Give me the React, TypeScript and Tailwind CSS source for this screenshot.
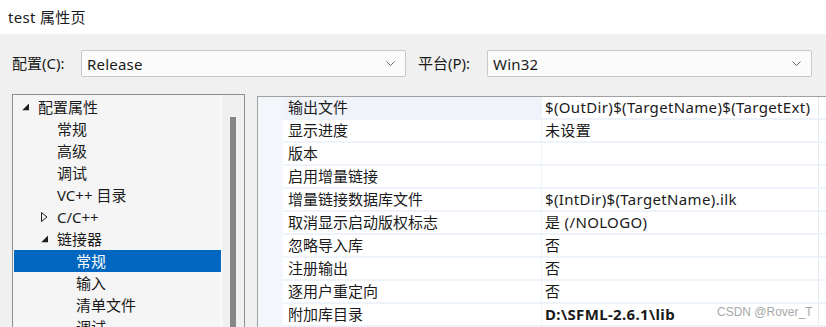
const font = { fontFamily: '"Noto Sans", "Noto Sans CJK SC", sans-serif' }

type TreeItem = { label: string; level: number; expand?: "open" | "closed"; selected?: boolean }

const tree: TreeItem[] = [
  { label: "配置属性", level: 0, expand: "open" },
  { label: "常规", level: 1 },
  { label: "高级", level: 1 },
  { label: "调试", level: 1 },
  { label: "VC++ 目录", level: 1 },
  { label: "C/C++", level: 1, expand: "closed" },
  { label: "链接器", level: 1, expand: "open" },
  { label: "常规", level: 2, selected: true },
  { label: "输入", level: 2 },
  { label: "清单文件", level: 2 },
  { label: "调试", level: 2 },
]

const props: { name: string; value: string; bold?: boolean }[] = [
  { name: "输出文件", value: "$(OutDir)$(TargetName)$(TargetExt)" },
  { name: "显示进度", value: "未设置" },
  { name: "版本", value: "" },
  { name: "启用增量链接", value: "" },
  { name: "增量链接数据库文件", value: "$(IntDir)$(TargetName).ilk" },
  { name: "取消显示启动版权标志", value: "是 (/NOLOGO)" },
  { name: "忽略导入库", value: "否" },
  { name: "注册输出", value: "否" },
  { name: "逐用户重定向", value: "否" },
  { name: "附加库目录", value: "D:\\SFML-2.6.1\\lib", bold: true },
]

function Combo({ value, className }: { value: string; className?: string }) {
  return (
    <div
      className={
        "flex h-[27px] items-center justify-between rounded-[2px] border border-[#c8c8c8] bg-[#fbfbfb] pr-[10px] pl-[5px] " +
        (className ?? "")
      }
    >
      <span className="text-[15px] leading-[20px] tracking-[0.2px] text-[#1a1a1a]">{value}</span>
      <svg width="9" height="5" viewBox="0 0 9 5">
        <polyline points="0.5,0.5 4.5,4.5 8.5,0.5" fill="none" stroke="#6a6a6a" strokeWidth="1" />
      </svg>
    </div>
  )
}

function Arrow({ kind }: { kind: "open" | "closed" }) {
  if (kind === "open") {
    return (
      <svg width="7" height="7" viewBox="0 0 7 7">
        <polygon points="7,0 7,7 0,7" fill="#1e1e1e" />
      </svg>
    )
  }
  return (
    <svg width="7" height="10" viewBox="0 0 7 10">
      <polygon points="0.5,0.5 6,5 0.5,9.5" fill="none" stroke="#1e1e1e" strokeWidth="1" />
    </svg>
  )
}

export default function App() {
  return (
    <div className="relative h-[327px] w-[826px] overflow-hidden bg-[#f0f0f0] text-[#1a1a1a]" style={font}>
      {/* title bar */}
      <div className="flex h-[34px] items-center bg-white px-[8px] text-[15px] tracking-[0.3px]">test 属性页</div>

      {/* configuration row */}
      <div className="flex items-center pt-[16px] pl-[12px]">
        <span className="w-[69px] text-[15px]">配置(C):</span>
        <Combo value="Release" className="w-[325px]" />
        <span className="ml-[12px] w-[69px] text-[15px]">平台(P):</span>
        <Combo value="Win32" className="w-[325px]" />
      </div>

      {/* panels */}
      <div className="mt-[17px] flex pl-[12px]">
        {/* tree */}
        <div className="flex h-[240px] w-[233px] border border-[#8e8e8e] bg-[#f5f5f5]">
          <div className="flex w-[209px] flex-col border-r border-white pt-[1px] pl-[1px]">
            {tree.map((t, i) => (
              <div
                key={i}
                className={
                  "flex h-[22px] shrink-0 items-center text-[15px] leading-[22px] " +
                  (t.selected ? "bg-[#0067c0] text-white" : "")
                }
                style={{ paddingLeft: 24 + t.level * 19 }}
              >
                <span className="relative">
                  {t.expand && (
                    <span className="absolute top-1/2 left-[-16px] flex -translate-y-1/2 items-center">
                      <Arrow kind={t.expand} />
                    </span>
                  )}
                  {t.label}
                </span>
              </div>
            ))}
          </div>
          <div className="flex flex-1 justify-center bg-[#f0f0f0] pt-[22px]">
            <div className="h-full w-[6px] bg-[#868686]" />
          </div>
        </div>

        {/* property grid */}
        <div className="mt-[2px] ml-[12px] flex h-[240px] flex-1 border-t border-l border-[#a0a0a0] bg-[#f3f6fb]">
          <div className="w-[25px] shrink-0" />
          <div className="flex flex-1 flex-col">
            {props.map((p, i) => (
              <div key={i} className="flex h-[23px] shrink-0 border-b-[2px] border-[#eef2f9] text-[15px] leading-[21px]">
                <div
                  className={
                    "w-[259px] shrink-0 border-r border-[#eef2f9] pl-[5px] " + (i === 0 ? "bg-[#f0f4fa]" : "bg-white")
                  }
                >
                  {p.name}
                </div>
                <div
                  className={
                    "w-[277px] border-r border-[#e4e8ee] bg-white pl-[3px] tracking-[0.35px] " +
                    (p.bold ? "font-bold" : "")
                  }
                >
                  {p.value}
                </div>
                <div className="flex-1 bg-white" />
              </div>
            ))}
          </div>
        </div>
      </div>

      {/* watermark */}
      <div
        className="absolute top-[303px] left-[717px] text-[12px] leading-[18px] text-[#a8a8a8]"
        style={{ fontFamily: '"Liberation Sans", Arial, sans-serif' }}
      >
        CSDN @Rover_T
      </div>
    </div>
  )
}
